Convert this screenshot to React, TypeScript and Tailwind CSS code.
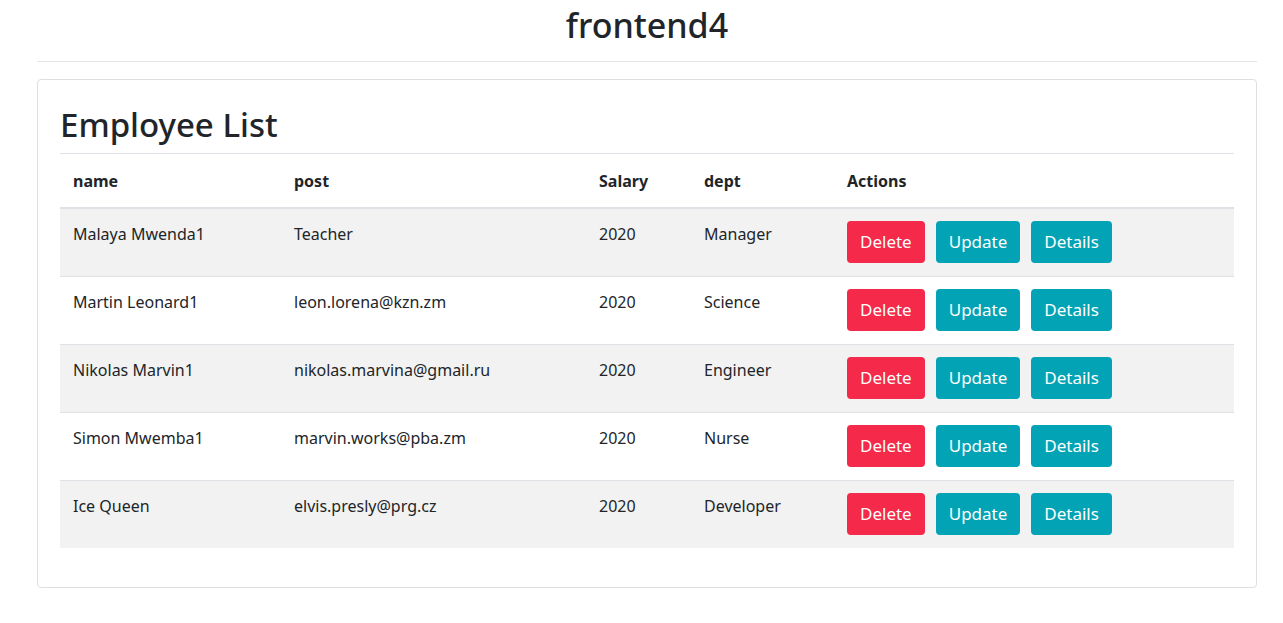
import React from "react";

interface Employee {
  name: string;
  post: string;
  salary: number;
  dept: string;
}

const employees: Employee[] = [
  { name: "Malaya Mwenda1", post: "Teacher", salary: 2020, dept: "Manager" },
  { name: "Martin Leonard1", post: "leon.lorena@kzn.zm", salary: 2020, dept: "Science" },
  { name: "Nikolas Marvin1", post: "nikolas.marvina@gmail.ru", salary: 2020, dept: "Engineer" },
  { name: "Simon Mwemba1", post: "marvin.works@pba.zm", salary: 2020, dept: "Nurse" },
  { name: "Ice Queen", post: "elvis.presly@prg.cz", salary: 2020, dept: "Developer" },
];

const App = () => {
  return (
    <div className="min-h-screen bg-white text-[#212529] font-['Noto_Sans',sans-serif]">
      <div className="ml-[37px] w-[1220px]">
        <h1 className="text-center text-[34px] font-medium leading-[42px] pt-[4px] pb-[15px]">
          frontend4
        </h1>
        <hr className="border-0 border-t border-[#e5e5e5]" />

        <div className="mt-[17px] border border-[#dfdfdf] rounded-[4px] px-[22px] pt-[24px] pb-[39px]">
          <h2 className="text-[33px] font-medium leading-[42px] pb-[7px]">Employee List</h2>
          <table className="w-full border-collapse text-[16px] leading-[24px]">
            <thead>
              <tr className="border-t border-b-2 border-[#dee2e6] text-left">
                <th className="w-[221px] px-[13px] pt-[15px] pb-[14px] font-bold">name</th>
                <th className="w-[305px] px-[13px] pt-[15px] pb-[14px] font-bold">post</th>
                <th className="w-[105px] px-[13px] pt-[15px] pb-[14px] font-bold">Salary</th>
                <th className="w-[143px] px-[13px] pt-[15px] pb-[14px] font-bold">dept</th>
                <th className="px-[13px] pt-[15px] pb-[14px] font-bold">Actions</th>
              </tr>
            </thead>
            <tbody>
              {employees.map((emp, i) => (
                <tr
                  key={emp.name}
                  className={
                    "border-t border-[#dee2e6] align-top " +
                    (i % 2 === 0 ? "bg-[#f2f2f2]" : "bg-white")
                  }
                >
                  <td className="px-[13px] pt-[13px] pb-[13px]">{emp.name}</td>
                  <td className="px-[13px] pt-[13px] pb-[13px]">{emp.post}</td>
                  <td className="px-[13px] pt-[13px] pb-[13px]">{emp.salary}</td>
                  <td className="px-[13px] pt-[13px] pb-[13px]">{emp.dept}</td>
                  <td className="px-[13px] pt-[13px] pb-[13px]">
                    <div className="flex gap-[11px] -mt-[1px]">
                      <button className="h-[42px] px-[13px] rounded-[4px] bg-[#f5294a] text-white text-[17px]">
                        Delete
                      </button>
                      <button className="h-[42px] px-[13px] rounded-[4px] bg-[#02a3b5] text-white text-[17px]">
                        Update
                      </button>
                      <button className="h-[42px] px-[13px] rounded-[4px] bg-[#02a3b5] text-white text-[17px]">
                        Details
                      </button>
                    </div>
                  </td>
                </tr>
              ))}
            </tbody>
          </table>
        </div>
      </div>
    </div>
  );
};

export default App;
